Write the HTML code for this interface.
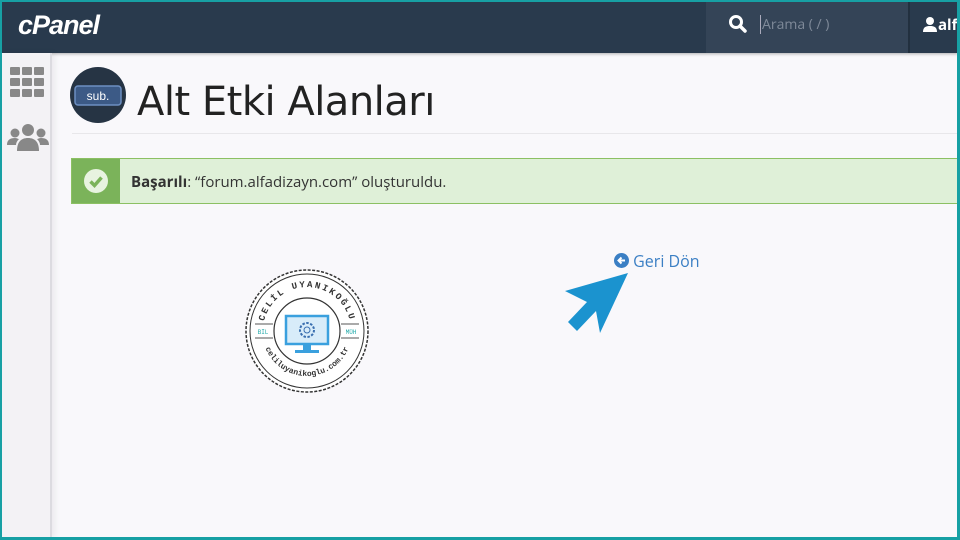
<!DOCTYPE html>
<html><head><meta charset="utf-8"><style>
*{margin:0;padding:0;box-sizing:border-box}
body{width:960px;height:540px;overflow:hidden;background:#17a0a4;font-family:"Open Sans","Liberation Sans",sans-serif;position:relative}
.frame{position:absolute;left:2px;top:2px;width:955px;height:535px;background:#f9f8fb;overflow:hidden}
.hdr{position:absolute;left:0;top:0;width:956px;height:51px;background:#293a4d;box-shadow:0 1px 3px rgba(0,0,0,.3)}
.logo{position:absolute;left:16px;top:8px;color:#fff;font:italic bold 27px "Liberation Sans",sans-serif;letter-spacing:-1px}
.search{position:absolute;left:704px;top:0;width:202px;height:51px;background:#344457}
.search span{position:absolute;left:54px;top:13px;color:#7f8a99;font-size:14px;border-left:1px solid #aab;padding-left:1px}
.user{position:absolute;left:921px;top:13px;color:#fff;font-size:15px;font-weight:bold}
.side{position:absolute;left:0;top:51px;width:50px;height:485px;background:#f3f2f5;border-right:2px solid #dcdbe0;box-shadow:3px 0 6px rgba(0,0,0,.06)}
h1{position:absolute;left:135px;top:77px;font-weight:normal;font-size:40px;color:#222;font-family:"DejaVu Sans","Liberation Sans",sans-serif;letter-spacing:-0.5px}
.line{position:absolute;left:70px;top:131px;width:900px;height:1px;background:#e8e7ea}
.alert{position:absolute;left:69px;top:156px;width:900px;height:46px;background:#dff0d8;border:1px solid #8cc063}
.alert .ic{position:absolute;left:0;top:0;width:48px;height:44px;background:#7bb35a}
.alert p{position:absolute;left:59px;top:13px;font-size:15px;color:#333}
.back{position:absolute;left:612px;top:248px;color:#3b7fc4;font-size:16px}
</style></head><body><div class="frame">
<div class="hdr"><div class="logo">cPanel</div>
<div class="search"><svg style="position:absolute;left:22px;top:12px" width="20" height="20" viewBox="0 0 20 20"><circle cx="8" cy="8" r="5.5" fill="none" stroke="#fff" stroke-width="3"/><path d="M12 12l5 5" stroke="#fff" stroke-width="3.5" stroke-linecap="round"/></svg><span>Arama ( / )</span></div>
<div style="position:absolute;left:906px;top:0;width:2px;height:51px;background:#22303f"></div>
<svg style="position:absolute;left:921px;top:14px" width="14" height="16" viewBox="0 0 14 16"><circle cx="7" cy="5" r="4" fill="#fff"/><path d="M0 16c0-5 3-6 7-6s7 1 7 6z" fill="#fff"/></svg>
<div class="user" style="left:936px">alf</div></div>
<div class="side">
<svg style="position:absolute;left:8px;top:14px" width="35" height="30"><g fill="#888"><rect x="0" y="0" width="10" height="8" rx="1"/><rect x="12" y="0" width="10" height="8" rx="1"/><rect x="24" y="0" width="10" height="8" rx="1"/><rect x="0" y="11" width="10" height="8" rx="1"/><rect x="12" y="11" width="10" height="8" rx="1"/><rect x="24" y="11" width="10" height="8" rx="1"/><rect x="0" y="22" width="10" height="8" rx="1"/><rect x="12" y="22" width="10" height="8" rx="1"/><rect x="24" y="22" width="10" height="8" rx="1"/></g></svg>
<svg style="position:absolute;left:5px;top:70px" width="42" height="30"><g fill="#888"><circle cx="21" cy="7" r="6"/><circle cx="8" cy="10" r="4.5"/><circle cx="34" cy="10" r="4.5"/><path d="M10 28c0-9 4-13 11-13s11 4 11 13z"/><path d="M0 22c0-5 3-7 8-7 2 0 3 1 4 1-2 2-3 4-3 6z"/><path d="M42 22c0-5-3-7-8-7-2 0-3 1-4 1 2 2 3 4 3 6z"/></g></svg>
</div>
<svg style="position:absolute;left:68px;top:65px" width="56" height="56"><circle cx="28" cy="28" r="28" fill="#263444"/><rect x="5" y="19" width="46" height="19" rx="3" fill="#3c5a86" stroke="#6d8fc2" stroke-width="1.5"/><text x="28" y="33" text-anchor="middle" fill="#fff" font-size="12" font-family="Liberation Sans">sub.</text></svg>
<h1>Alt Etki Alanları</h1>
<div class="line"></div>
<div class="alert"><div class="ic"><svg style="position:absolute;left:12px;top:10px" width="24" height="24"><circle cx="12" cy="12" r="12" fill="#e8f3e0"/><path d="M6.5 12.5l4 4 7-8" stroke="#7bb35a" stroke-width="3.5" fill="none"/></svg></div><p><b>Başarılı</b>: “forum.alfadizayn.com” oluşturuldu.</p></div>
<div class="back"><svg style="vertical-align:-1px" width="15" height="15"><circle cx="7.5" cy="7.5" r="7.5" fill="#3b7fc4"/><path d="M11 7.5H5M7.5 4.5l-3 3 3 3" stroke="#fff" stroke-width="2" fill="none"/></svg> Geri Dön</div>
<svg style="position:absolute;left:-2px;top:-2px" width="960" height="540"><polygon points="628,273 565,291 587,302 568,322 577,331 596,311 600,333" fill="#1b93cf"/>
<g transform="translate(307,331)" font-family="Liberation Mono" >
<circle r="61" fill="#fff" stroke="#333" stroke-width="1.5" stroke-dasharray="3 1.5"/><circle r="57" fill="none" stroke="#333" stroke-width="1"/><circle r="33" fill="none" stroke="#333" stroke-width="1.2"/>
<path d="M-52 -7h18M-52 7h18M34 -7h18M34 7h18" stroke="#555" stroke-width="1"/>
<text x="-44" y="3" font-size="6" fill="#2aa" text-anchor="middle">BİL</text><text x="44" y="3" font-size="6" fill="#2aa" text-anchor="middle">MÜH</text>
<defs><path id="ta" d="M-44 0A44 44 0 0 1 44 0"/><path id="tb" d="M-45 0A45 45 0 0 0 45 0"/></defs>
<text font-size="9" font-weight="bold" fill="#333" letter-spacing="2"><textPath href="#ta" startOffset="50%" text-anchor="middle">CELİL UYANIKOĞLU</textPath></text>
<text font-size="8" font-weight="bold" fill="#333"><textPath href="#tb" startOffset="50%" text-anchor="middle" dy="6">celiluyanikoglu.com.tr</textPath></text>
<rect x="-21" y="-15" width="42" height="28" fill="#d8ecf9" stroke="#3aa0de" stroke-width="2.5"/><rect x="-4" y="13" width="8" height="6" fill="#3aa0de"/><rect x="-12" y="19" width="24" height="3" fill="#3aa0de"/>
<circle cx="0" cy="-1" r="7" fill="none" stroke="#3a6fb0" stroke-width="2" stroke-dasharray="2.5 1.5"/><circle cx="0" cy="-1" r="3" fill="none" stroke="#3a6fb0" stroke-width="1"/>
</g></svg>
</div></body></html>
